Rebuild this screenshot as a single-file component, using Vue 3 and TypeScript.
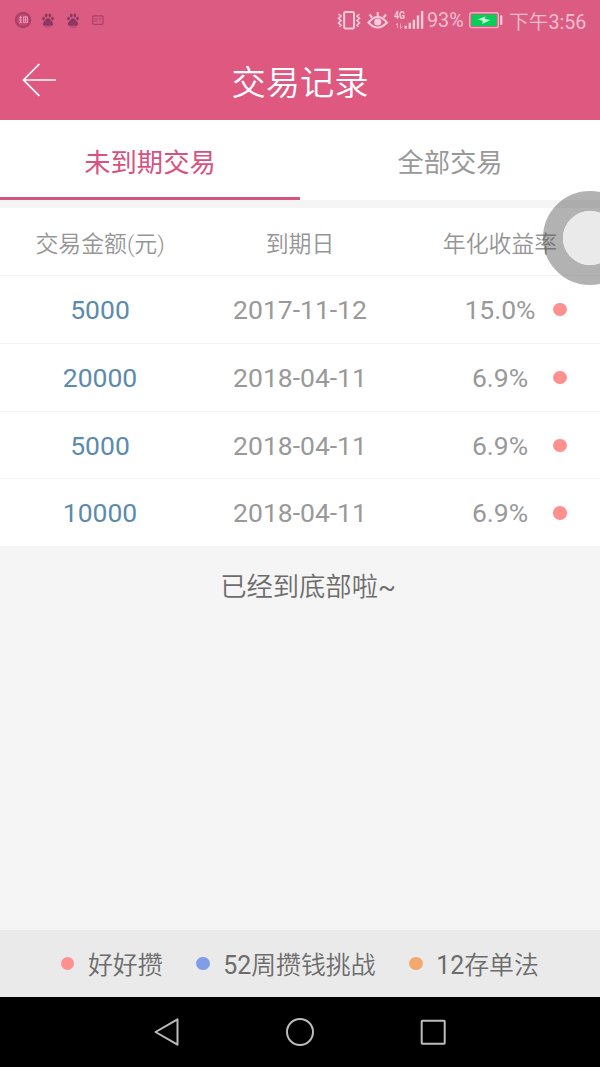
<script setup lang="ts">
interface Deal {
  amount: string
  due: string
  rate: string
}

interface Plan {
  color: string
  count: string
  name: string
}

const deals: Deal[] = [
  { amount: '5000', due: '2017-11-12', rate: '15.0%' },
  { amount: '20000', due: '2018-04-11', rate: '6.9%' },
  { amount: '5000', due: '2018-04-11', rate: '6.9%' },
  { amount: '10000', due: '2018-04-11', rate: '6.9%' },
]
const plans: Plan[] = [
  { color: 'red', count: '', name: '好好攒' },
  { color: 'blue', count: '52', name: '周攒钱挑战' },
  { color: 'orange', count: '12', name: '存单法' },
]
const paws: number[] = [1, 2]
</script>

<template>
  <div class="screen">
    <div class="status">
      <div class="notices">
        <svg class="badge" width="18" height="18" viewBox="0 0 18 18">
          <circle cx="9" cy="9" r="8.3" fill="#ac4069" />
          <circle cx="9" cy="9" r="6" fill="#bd4b74" />
          <path d="M5 6.5h3M6.5 5v7M5 9h3M5 12l3-1M9.5 6h4v5.5h-4zM11.5 5v7M9.5 9h4" fill="none" stroke="#e98fb0" stroke-width="1.1" />
        </svg>
        <svg v-for="p in paws" :key="p" class="paw" width="12" height="15" viewBox="0 0 12 15">
          <g fill="#8c3760">
            <ellipse cx="1.5" cy="5.6" rx="1.3" ry="1.8" />
            <ellipse cx="4.2" cy="2.5" rx="1.3" ry="2" />
            <ellipse cx="7.8" cy="2.5" rx="1.3" ry="2" />
            <ellipse cx="10.5" cy="5.6" rx="1.3" ry="1.8" />
            <path d="M6 5.3C4 5.3 3.5 7.5 2 8.7c-1.5 1.2-1.7 4 .8 4h6.4c2.5 0 2.3-2.8.8-4C8.500 7.500 8 5.300 6 5.300z" />
            <path d="M3 13.500h6v1H3z" opacity=".6" />
          </g>
          <path d="M4 9.500v1.700M6 9.500v1.700h2V9.500" fill="none" stroke="#a03c68" stroke-width=".7" />
        </svg>
        <svg class="card" width="12" height="11" viewBox="0 0 12 11">
          <rect x=".7" y=".9" width="10.400" height="8.400" rx="1.200" fill="none" stroke="#a84068" stroke-width="1.200" />
          <path d="M2.800 3.700h2v2.500h-2zM6.300 3.700h3M7.800 3.700v2.800" fill="none" stroke="#b84a72" />
        </svg>
      </div>
      <div class="signals">
        <svg width="88" height="24" viewBox="337 8 88 24">
          <g fill="none" stroke="#f8cbdb" stroke-width="2">
            <rect x="344.200" y="12" width="9.800" height="16.500" rx="1.200" />
            <path d="M338.500 14l2.500 2-2.500 2.300 2.500 2.300-2.500 2.300 2.500 2.300-1.500 1.500M359.500 14l-2.500 2 2.500 2.300-2.500 2.300 2.500 2.300-2.500 2.300 1.500 1.500" stroke-width="1.600" />
            <path d="M368.500 22.500q9-11 18.500 0-9.500 10-18.500 0zM377.700 12v4.500M369.500 14.500l2.500 3M386 14.500l-2.500 3" />
          </g>
          <circle cx="377.700" cy="22" r="3.600" fill="#f8cbdb" />
          <text x="394" y="18.700" class="net" textLength="11" lengthAdjust="spacingAndGlyphs">4G</text>
          <path d="M397.500 28v-5l-1.500 2M400.500 23.500v5l2-2" fill="none" stroke="#eda5be" stroke-width="1" />
          <path d="M404.500 25.700h2.400v3h-2.400zM408.600 22.800h2.400v5.900h-2.400zM412.700 19.700h2.400v9h-2.400zM416.800 15.500h2.400v13.200h-2.400zM420.900 11h2.400v17.700h-2.400z" fill="#f8cbdb" />
        </svg>
        <span class="percent latin">93%</span>
        <svg class="battery" width="34" height="18" viewBox="0 0 34 18">
          <rect x=".8" y="1.800" width="28.500" height="14.800" rx="1.800" fill="none" stroke="#f2b0c6" stroke-width="1.400" />
          <rect x="2.400" y="3.400" width="25.300" height="11.600" fill="#05cf57" />
          <path d="M8.500 8.600l8-3-.7 2.500 5.700.9-8.500 4 .9-3.200z" fill="#c9f7d7" />
          <rect x="31.200" y="4.300" width="2.100" height="9.800" rx=".8" fill="#f8cbdb" />
        </svg>
        <span class="clock">下午<span class="latin">3:56</span></span>
      </div>
    </div>

    <header class="bar">
      <svg class="back" width="36" height="34" viewBox="0 0 36 34">
        <path d="M17.300 1L1.500 17l15.800 15.800M1.500 17H34" fill="none" stroke="#fff" stroke-width="1.700" />
      </svg>
      <h1>交易记录</h1>
    </header>

    <nav class="tabs">
      <span class="tab active">未到期交易</span>
      <span class="tab">全部交易</span>
    </nav>

    <div class="table">
      <div class="row head">
        <span>交易金额(元)</span><span>到期日</span><span>年化收益率</span>
      </div>
      <div v-for="(d, i) in deals" :key="i" class="row latin">
        <span class="amount">{{ d.amount }}</span>
        <span>{{ d.due }}</span>
        <span>{{ d.rate }}</span>
        <i class="dot red mark"></i>
      </div>
    </div>

    <p class="end">已经到底部啦<span class="latin">~</span></p>

    <footer class="legend">
      <span v-for="p in plans" :key="p.color" class="item">
        <i class="dot" :class="p.color"></i>
        <span><span class="latin">{{ p.count }}</span>{{ p.name }}</span>
      </span>
    </footer>

    <div class="system">
      <svg width="600" height="70" viewBox="0 0 600 70">
        <g fill="none" stroke="#bcbcbc" stroke-width="2" stroke-linejoin="round">
          <path d="M155.500 35L177.500 22.300V47.700z" />
          <circle cx="300" cy="35" r="13" />
          <rect x="421.700" y="23.700" width="23" height="23" rx=".6" />
        </g>
      </svg>
    </div>

    <div class="assist"><div class="assist-core"></div></div>
  </div>
</template>

<style>
body {
  margin: 0;
}
</style>

<style scoped>
.screen {
  position: relative;
  display: flex;
  flex-direction: column;
  width: 600px;
  height: 1067px;
  overflow: hidden;
  background: #f5f5f5;
  color: #999;
  font-family: Roboto, "Noto Sans CJK SC", sans-serif;
  font-weight: 350;
}
.latin {
  font-weight: 400;
}
.status {
  display: flex;
  justify-content: space-between;
  height: 40px;
  background: #db5b83;
}
.notices,
.signals {
  display: flex;
  align-items: center;
}
.badge {
  margin-left: 14px;
}
.paw {
  margin-left: 10px;
}
.paw + .paw {
  margin-left: 13px;
}
.card {
  margin-left: 13px;
}
.signals {
  width: 263px;
  color: #f5bfd1;
  font-size: 19.700px;
  white-space: nowrap;
}
.net {
  fill: #f8cbdb;
  font-size: 10.500px;
  font-weight: 700;
}
.percent {
  width: 38px;
  margin-left: 2px;
}
.battery {
  margin-left: 4px;
}
.clock {
  margin-left: 6px;
}
.bar {
  display: flex;
  align-items: center;
  height: 80px;
  background: #df5880;
}
.back {
  margin-left: 22px;
}
h1 {
  width: 484px;
  margin: 0;
  padding-top: 5px;
  color: #fff;
  font-size: 34.300px;
  font-weight: 350;
  line-height: 80px;
  text-align: center;
}
.tabs {
  display: flex;
  height: 80px;
  background: #fff;
}
.tab {
  box-sizing: border-box;
  flex: 1;
  height: 80px;
  font-size: 26.300px;
  font-weight: 400;
  line-height: 86px;
  text-align: center;
}
.tab.active {
  border-bottom: 3px solid #d2557e;
  color: #d9517e;
}
.table {
  margin-top: 8px;
}
.row {
  position: relative;
  box-sizing: border-box;
  display: grid;
  grid-template-columns: repeat(3, 200px);
  height: 67.750px;
  border-bottom: 1px solid #f3f3f3;
  background: #fff;
  font-size: 26.500px;
  line-height: 67.500px;
  text-align: center;
}
.head {
  height: 68px;
  color: #959595;
  font-size: 22.900px;
  line-height: 73px;
}
.amount {
  color: #5b8bac;
}
.dot {
  flex: none;
  width: 13.400px;
  height: 13.400px;
  border-radius: 50%;
}
.red {
  background: #ff9090;
}
.blue {
  background: #7f9ee8;
}
.orange {
  background: #f3a96e;
}
.mark {
  position: absolute;
  top: 27px;
  left: 553.300px;
}
.end {
  margin: 0;
  padding-left: 16px;
  color: #6c6c6c;
  font-size: 26.300px;
  line-height: 81px;
  text-align: center;
}
.legend {
  display: flex;
  gap: 33.700px;
  height: 67px;
  margin-top: auto;
  padding-left: 61px;
  background: #eaeaea;
  color: #6c6c6c;
  font-size: 24.900px;
}
.item {
  display: flex;
  align-items: center;
  gap: 13.500px;
  line-height: 67px;
}
.item > span {
  padding-top: 3px;
}
.system {
  height: 70px;
  background: #000;
}
.system svg {
  display: block;
}
.assist {
  position: absolute;
  top: 191px;
  left: 543px;
  box-sizing: border-box;
  width: 94px;
  height: 94px;
  border: 20px solid rgba(80, 80, 80, 0.440);
  border-radius: 50%;
}
.assist-core {
  width: 54px;
  height: 54px;
  border-radius: 50%;
  background: #eaeaea;
}
</style>
